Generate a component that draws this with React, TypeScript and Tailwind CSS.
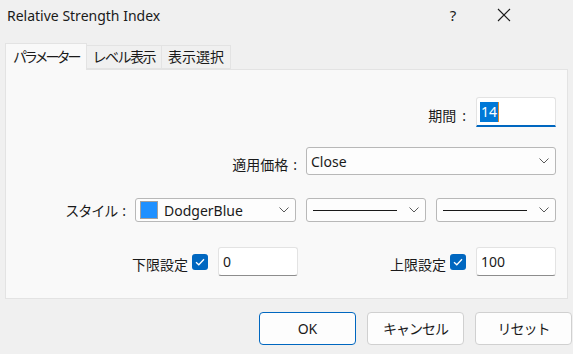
import { useState } from "react";

const font = "[font-family:'Noto_Sans','Noto_Sans_CJK_JP',sans-serif]";

function Chevron() {
  return (
    <svg width="10" height="6" viewBox="0 0 10 6" className="shrink-0">
      <path d="M0.5 0.5 L5 5 L9.5 0.5" fill="none" stroke="#5a5a5a" strokeWidth="1" />
    </svg>
  );
}

function Check() {
  return (
    <span className="w-[16px] h-[16px] rounded-[3px] bg-[#0067c0] flex items-center justify-center shrink-0">
      <svg width="10" height="8" viewBox="0 0 10 8">
        <path d="M1 4.2 L3.8 6.8 L9 1.2" fill="none" stroke="#ffffff" strokeWidth="1.3" />
      </svg>
    </span>
  );
}

function Field({ value }: { value: string }) {
  return (
    <div className="w-[80px] h-[29px] bg-white border border-[#e3e3e3] border-b-[#8d8d8d] rounded-[3px] flex items-center px-[4px] text-[14px] text-[#1a1a1a]">
      {value}
    </div>
  );
}

function LineSelect() {
  return (
    <div className="w-[120px] h-[24px] bg-[#fdfdfd] border border-[#b8b8b8] rounded-[3px] flex items-center pl-[6px] pr-[6px] gap-[12px]">
      <span className="w-[86px] h-px bg-[#1a1a1a]" />
      <Chevron />
    </div>
  );
}

export default function App() {
  const [tab, setTab] = useState(0);
  const tabs = [
    { label: "パラメーター", track: "tracking-[-3px]" },
    { label: "レベル表示", track: "tracking-[-1.5px]" },
    { label: "表示選択", track: "tracking-normal" },
  ];

  return (
    <div className={`w-[573px] h-[354px] bg-[#f0f0f0] flex flex-col text-[#1a1a1a] ${font}`}>
      {/* title bar */}
      <div className="h-[30px] flex items-center pl-[7px] text-[14px]">
        <span className="flex-1">Relative Strength Index</span>
        <span className="w-[14px] text-center text-[15px] mr-[37px]">?</span>
        <svg width="14" height="14" viewBox="0 0 14 14" className="mr-[62px]">
          <path d="M1 1 L13 13 M13 1 L1 13" stroke="#1a1a1a" strokeWidth="1.1" />
        </svg>
      </div>

      {/* tabs */}
      <div className="mt-[13px] ml-[5px] flex items-end h-[26px] text-[14px]">
        {tabs.map((t, i) =>
          i === tab ? (
            <button key={t.label} onClick={() => setTab(i)} className={`h-[27px] -mb-px px-[7px] bg-[#f9f9f9] border border-b-0 border-[#e3e3e3] z-10 leading-none ${t.track}`}>
              {t.label}
            </button>
          ) : (
            <button key={t.label} onClick={() => setTab(i)} className={`h-[24px] px-[6px] bg-[#f0f0f0] border border-l-0 border-[#e3e3e3] leading-none ${t.track}`}>
              {t.label}
            </button>
          )
        )}
      </div>

      {/* panel */}
      <div className="mx-[5px] h-[230px] bg-[#f9f9f9] border border-[#e3e3e3] pt-[27px] pr-[11px] flex flex-col text-[14px]">
        <div className="flex justify-end items-center">
          <span className="mt-[6px]">期間</span>
          <span className="mt-[6px] ml-[6px] mr-[10px]">:</span>
          <div className="w-[80px] h-[30px] bg-white border border-[#e3e3e3] border-b-2 border-b-[#0067c0] rounded-t-[3px] flex items-center pl-[3px]">
            <span className="bg-[#0078d7] text-white leading-[20px] px-px border-r border-r-[#e08a2c]">14</span>
          </div>
        </div>

        <div className="flex justify-end items-center mt-[20px]">
          <span className="mt-[6px]">適用価格</span>
          <span className="mt-[6px] ml-[5px] mr-[9px]">:</span>
          <div className="w-[250px] h-[28px] bg-[#fdfdfd] border border-[#b8b8b8] rounded-[3px] flex items-center justify-between pl-[4px] pr-[6px]">
            <span>Close</span>
            <Chevron />
          </div>
        </div>

        <div className="flex justify-end items-center mt-[23px]">
          <span className="tracking-[-1px]">スタイル</span>
          <span className="ml-[5px] mr-[9px]">:</span>
          <div className="w-[161px] h-[24px] bg-[#fdfdfd] border border-[#b8b8b8] rounded-[3px] flex items-center pl-[4px] pr-[6px]">
            <span className="w-[18px] h-[18px] bg-[#1e90ff] border border-[#a0a0a0]" />
            <span className="ml-[6px] flex-1">DodgerBlue</span>
            <Chevron />
          </div>
          <div className="ml-[10px]"><LineSelect /></div>
          <div className="ml-[10px]"><LineSelect /></div>
        </div>

        <div className="flex justify-end items-center mt-[25px]">
          <span className="mr-[4px] mt-[6px]">下限設定</span>
          <Check />
          <div className="ml-[10px]"><Field value="0" /></div>
          <span className="ml-[92px] mr-[4px] mt-[6px]">上限設定</span>
          <Check />
          <div className="ml-[10px]"><Field value="100" /></div>
        </div>
      </div>

      {/* buttons */}
      <div className="mt-[13px] flex justify-end gap-[11px] pr-[1px] text-[14px]">
        <button className="w-[97px] h-[33px] bg-[#fdfdfd] border border-[#0067c0] rounded-[4px]">OK</button>
        <button className="w-[97px] h-[33px] bg-[#fdfdfd] border border-[#d0d0d0] rounded-[4px] tracking-[-1px]">キャンセル</button>
        <button className="w-[97px] h-[33px] bg-[#fdfdfd] border border-[#d0d0d0] rounded-[4px] tracking-[-1px]">リセット</button>
      </div>
    </div>
  );
}
